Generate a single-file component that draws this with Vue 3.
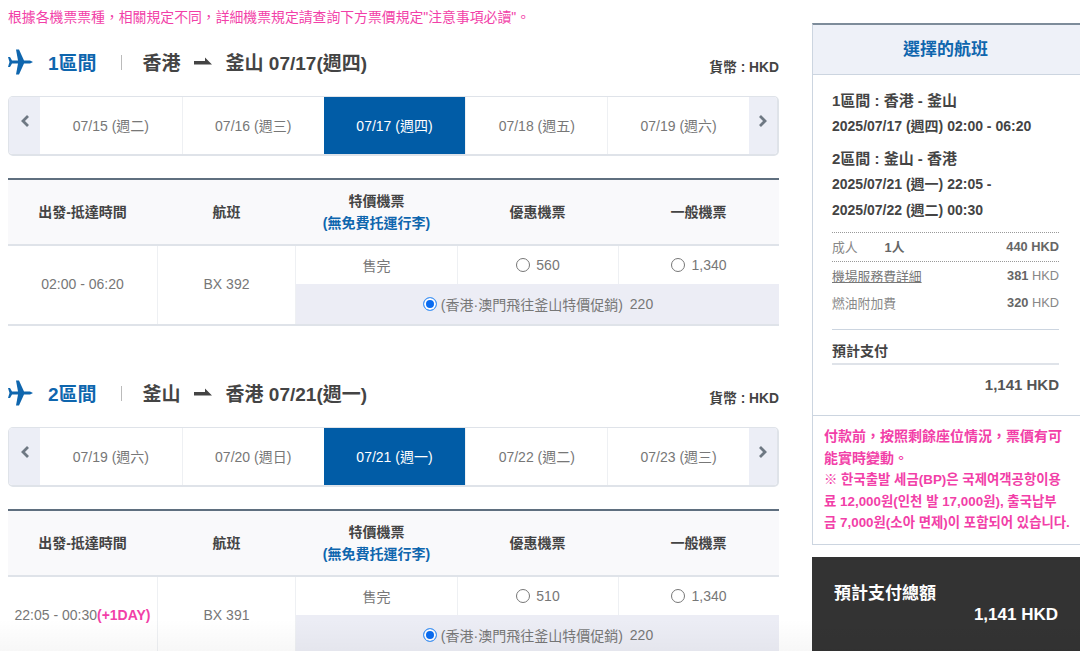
<script setup>
const sections = [
  {
    id: 1, from: '香港', to: '釜山', date: '07/17(週四)',
    days: ['07/15 (週二)', '07/16 (週三)', '07/17 (週四)', '07/18 (週五)', '07/19 (週六)'],
    time: '02:00 - 06:20', plus: '', flight: 'BX 392', saver: '560', normal: '1,340'
  },
  {
    id: 2, from: '釜山', to: '香港', date: '07/21(週一)',
    days: ['07/19 (週六)', '07/20 (週日)', '07/21 (週一)', '07/22 (週二)', '07/23 (週三)'],
    time: '22:05 - 00:30', plus: '(+1DAY)', flight: 'BX 391', saver: '510', normal: '1,340'
  }
]
</script>

<template>
  <div class="page">
    <div class="main">
      <p class="rule-note">根據各機票票種，相關規定不同，詳細機票規定請查詢下方票價規定"注意事項必讀"。</p>

      <section v-for="s in sections" :key="s.id" class="leg">
        <div class="leg-head">
          <svg class="plane" width="25" height="26" viewBox="0 0 25 26">
            <path d="M25 13 22 11.500H16L11 .5H8L10 11.500H4L2 8H0L1.500 13 0 18H2L4 14.500H10L8 25.500H11L16 14.500H22Z" fill="#0f66ae"/>
          </svg>
          <span class="leg-no">{{ s.id }}區間</span>
          <span class="sep"></span>
          <span class="city">{{ s.from }}</span>
          <svg class="route-arrow" width="18" height="8" viewBox="0 0 18 8">
            <path d="M0 4H11V.5L18 7.500H0Z" fill="#444"/>
          </svg>
          <span class="city">{{ s.to }} {{ s.date }}</span>
          <span class="currency">貨幣 : HKD</span>
        </div>

        <div class="days">
          <button class="day-nav">
            <svg width="12" height="14" viewBox="0 0 12 14"><path d="M9 2 4 7l5 5" fill="none" stroke="#6e7883" stroke-width="2.800"/></svg>
          </button>
          <div v-for="(d, i) in s.days" :key="d" class="day" :class="{ active: i === 2 }">{{ d }}</div>
          <button class="day-nav last">
            <svg width="12" height="14" viewBox="0 0 12 14"><path d="M3 2l5 5-5 5" fill="none" stroke="#6e7883" stroke-width="2.800"/></svg>
          </button>
        </div>

        <div class="fares">
          <div class="fares-head">
            <div>出發-抵達時間</div>
            <div>航班</div>
            <div class="promo-head">特價機票<span>(無免費托運行李)</span></div>
            <div>優惠機票</div>
            <div>一般機票</div>
          </div>
          <div class="fares-row">
            <div class="cell-time">{{ s.time }}<b v-if="s.plus">{{ s.plus }}</b></div>
            <div class="cell-flight">{{ s.flight }}</div>
            <div class="cell-prices">
              <div class="price sold">售完</div>
              <label class="price"><input type="radio" :name="'leg' + s.id"> {{ s.saver }}</label>
              <label class="price"><input type="radio" :name="'leg' + s.id"> {{ s.normal }}</label>
              <label class="promo"><input type="radio" :name="'leg' + s.id" checked> (香港·澳門飛往釜山特價促銷)<em>220</em></label>
            </div>
          </div>
        </div>
      </section>
    </div>

    <aside class="side">
      <div class="summary">
        <h2>選擇的航班</h2>
        <div class="summary-body">
          <div class="trip">
            <h3>1區間 : 香港 - 釜山</h3>
            <p>2025/07/17 (週四) 02:00 - 06:20</p>
          </div>
          <div class="trip">
            <h3>2區間 : 釜山 - 香港</h3>
            <p>2025/07/21 (週一) 22:05 -<br>2025/07/22 (週二) 00:30</p>
          </div>
          <div class="fee adult"><span>成人<i>1人</i></span><b>440 HKD</b></div>
          <div class="fee airport"><a>機場服務費詳細</a><span><b>381</b> HKD</span></div>
          <div class="fee"><span>燃油附加費</span><span><b>320</b> HKD</span></div>
          <div class="due">預計支付</div>
          <div class="due-amount">1,141 HKD</div>
        </div>
        <div class="warning">
          付款前，按照剩餘座位情況，票價有可能實時變動。<br>
          <span class="warning-ko">※ 한국출발 세금(BP)은 국제여객공항이용<br>료 12,000원(인천 발 17,000원), 출국납부<br>금 7,000원(소아 면제)이 포함되어 있습니다.</span>
        </div>
      </div>
      <div class="total">
        <div>預計支付總額</div>
        <div class="total-amount">1,141 HKD</div>
      </div>
    </aside>
  </div>
</template>

<style>
html, body {
  margin: 0;
  background: #fff;
}
</style>

<style scoped>
.page {
  position: relative;
  display: flex;
  gap: 33px;
  width: 1080px;
  height: 651px;
  overflow: hidden;
  padding-left: 8px;
  box-sizing: border-box;
  font-family: "Liberation Sans", "Noto Sans CJK TC", "Noto Sans CJK KR", sans-serif;
  font-size: 13px;
  color: #666;
}

/* faint shade along the bottom edge of the window */
.page::after {
  content: "";
  position: absolute;
  left: 0;
  right: 0;
  bottom: 0;
  height: 32px;
  background: linear-gradient(rgba(0, 0, 0, 0), rgba(0, 0, 0, 0.03));
  pointer-events: none;
}

.main {
  width: 771px;
  flex: none;
}

.rule-note {
  margin: 0;
  padding-top: 9px;
  height: 24px;
  line-height: 16px;
  font-size: 13.850px;
  color: #f23fa8;
}

.leg {
  height: 331px;
}

.leg-head {
  display: flex;
  align-items: center;
  height: 40px;
  padding-top: 8px;
  color: #444;
}

.plane {
  flex: none;
  margin: 2px 15px 0 0;
}

.leg-no {
  font-size: 19px;
  font-weight: bold;
  color: #0f66ae;
}

.sep {
  width: 1px;
  height: 15px;
  margin: 3px 21px 0 24px;
  background: #bbb;
}

.city {
  font-size: 19px;
  font-weight: bold;
  color: #444;
}

.route-arrow {
  margin: 0 14px 0 13px;
}

.currency {
  margin-left: auto;
  padding-top: 10px;
  font-size: 13.800px;
  font-weight: bold;
  color: #444;
}

.days {
  display: flex;
  height: 60px;
  margin-top: 15px;
  border: 2px solid #dfe3e9;
  border-width: 1px 2px 2px 1px;
  border-radius: 5px;
  overflow: hidden;
  box-sizing: border-box;
}

.day-nav {
  flex: none;
  width: 31px;
  padding: 0 0 6px;
  border: none;
  background: #eceef6;
}

.day-nav.last {
  flex: 1;
}

.day {
  flex: none;
  width: 141.800px;
  box-sizing: border-box;
  display: flex;
  align-items: center;
  justify-content: center;
  padding-bottom: 1px;
  border-left: 1px solid #eef0f3;
  font-size: 14px;
  color: #777;
}

.day:nth-child(2) {
  border-left: none;
}

.day.active {
  border-left: none;
  background: #015ca6;
  color: #fff;
}

.fares {
  margin-top: 22px;
  border-top: 2px solid #5f6f7f;
  border-bottom: 2px solid #dfe3e9;
}

.fares-head,
.fares-row {
  display: grid;
  grid-template-columns: 149px 139px 161px 161px 161px;
}

.fares-head {
  height: 64px;
  border-bottom: 2px solid #dfe3e9;
  background: #f9f9fb;
  font-size: 14px;
  font-weight: bold;
  color: #444;
}

.fares-head > div {
  display: flex;
  align-items: center;
  justify-content: center;
  padding-bottom: 2px;
}

.fares-head .promo-head {
  flex-direction: column;
  line-height: 22px;
  padding-bottom: 0;
}

.promo-head span {
  color: #0f66ae;
  font-size: 14px;
}

.fares-row {
  height: 78px;
  font-size: 14px;
  color: #777;
}

.cell-time,
.cell-flight {
  display: flex;
  align-items: center;
  justify-content: center;
  padding-bottom: 2px;
}

.cell-flight {
  border-left: 1px solid #eef0f3;
  border-right: 1px solid #eef0f3;
}

.cell-time b {
  color: #f23fa8;
}

.cell-prices {
  grid-column: span 3;
  display: grid;
  grid-template-columns: repeat(3, 161px);
  grid-template-rows: 38px 40px;
}

.price {
  display: flex;
  align-items: center;
  justify-content: center;
  gap: 6px;
  border-left: 1px solid #eef0f3;
}

.sold {
  border-left: none;
}

.promo {
  grid-column: span 3;
  display: flex;
  align-items: center;
  justify-content: center;
  padding-left: 1px;
  background: #ecedf5;
  font-size: 14px;
}

.promo em {
  margin-left: 7px;
  font-style: normal;
}

input[type="radio"] {
  appearance: none;
  flex: none;
  width: 14px;
  height: 14px;
  margin: 0;
  border: 1px solid #777;
  border-radius: 50%;
  background: #fff;
}

input[type="radio"]:checked {
  margin-right: 4px;
  border: 1px solid #4c9bf5;
  background: #0a6cf0;
  box-shadow: inset 0 0 0 2px #fff;
}

.side {
  flex: none;
  width: 270px;
  padding-top: 23px;
}

.summary {
  border: 1px solid #ccd5e0;
  border-top: 2px solid #7d8c9a;
  height: 522px;
  box-sizing: border-box;
}

.summary h2 {
  margin: 0;
  height: 49px;
  line-height: 49px;
  border-bottom: 1px solid #ccd5e0;
  background: #eef1f8;
  text-align: center;
  font-size: 17px;
  color: #0f66ae;
  padding-right: 3px;
}

.summary-body {
  height: 341px;
  padding: 14px 22px 0 19px;
  box-sizing: border-box;
  border-bottom: 1px solid #ccd5e0;
}

.trip {
  margin-bottom: 8px;
  color: #444;
  font-weight: bold;
}

.trip h3 {
  margin: 0;
  font-size: 15px;
  line-height: 24px;
}

.trip p {
  margin: 0;
  font-size: 14px;
  line-height: 26px;
}

.fee {
  display: flex;
  justify-content: space-between;
  align-items: center;
  box-sizing: border-box;
  height: 27px;
  font-size: 12.800px;
  color: #888;
}

.fee b {
  color: #666;
}

.fee i {
  margin-left: 27px;
  font-style: normal;
  font-weight: bold;
  color: #666;
}

.fee a {
  color: #777;
  text-decoration: underline;
}

.fee.adult {
  height: 30px;
  margin-top: 9px;
  padding-bottom: 2px;
  border-top: 1px dotted #999;
  border-bottom: 1px dotted #999;
}

.due {
  margin-top: 13px;
  border-top: 1px solid #ccd5e0;
  border-bottom: 2px solid #dfe3e9;
  height: 33px;
  line-height: 42px;
  font-size: 14px;
  font-weight: bold;
  color: #444;
}

.due-amount {
  margin-top: 11px;
  text-align: right;
  font-size: 15px;
  font-weight: bold;
  color: #555;
}

.warning {
  padding: 10px 9px 0 11px;
  font-size: 14px;
  line-height: 21.500px;
  font-weight: bold;
  color: #f23fa8;
}

.warning-ko {
  font-size: 13.400px;
}

.total {
  height: 100px;
  margin-top: 12px;
  padding: 26px 24px 0 22px;
  background: #333;
  color: #fff;
  font-size: 17px;
  line-height: 21px;
  font-weight: bold;
  box-sizing: border-box;
}

.total-amount {
  text-align: right;
}
</style>
